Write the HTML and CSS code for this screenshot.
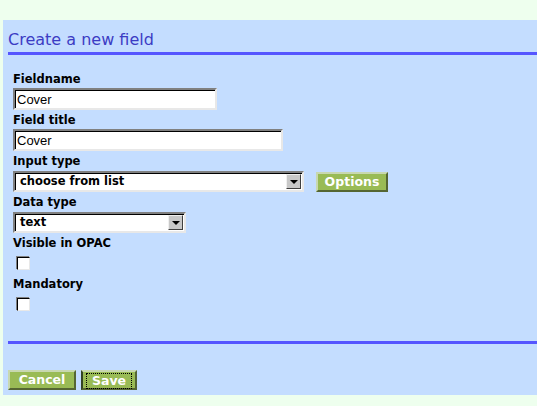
FILE: index.html
```html
<!DOCTYPE html>
<html>
<head>
<meta charset="utf-8">
<link rel="stylesheet" href="styles.css">
</head>
<body>
<div class="panel">
  <h1 class="title">Create a new field</h1>
  <form class="form">
    <div class="field">
      <label class="lbl">Fieldname</label>
      <input class="txt txt-short" type="text" value="Cover">
    </div>
    <div class="field">
      <label class="lbl">Field title</label>
      <input class="txt txt-long" type="text" value="Cover">
    </div>
    <div class="field">
      <label class="lbl">Input type</label>
      <div class="row">
        <div class="sel sel-wide"><span class="sel-text">choose from list</span><span class="sel-btn"><span class="tri"></span></span></div>
        <button type="button" class="btn btn-opt">Options</button>
      </div>
    </div>
    <div class="field">
      <label class="lbl">Data type</label>
      <div class="row">
        <div class="sel sel-narrow"><span class="sel-text">text</span><span class="sel-btn"><span class="tri"></span></span></div>
      </div>
    </div>
    <div class="field">
      <label class="lbl">Visible in OPAC</label>
      <span class="chk"></span>
    </div>
    <div class="field">
      <label class="lbl">Mandatory</label>
      <span class="chk"></span>
    </div>
  </form>
  <div class="rule"></div>
  <div class="actions">
    <button type="button" class="btn btn-cancel">Cancel</button>
    <button type="button" class="btn btn-save"><span class="focus">Save</span></button>
  </div>
</div>
</body>
</html>
```
FILE: styles.css
```css
html, body {
  margin: 0;
  padding: 0;
  background: #eeffee;
  font-family: "DejaVu Sans", Verdana, sans-serif;
}
.panel {
  margin: 20px 0 0 3px;
  padding: 0 0 0 5px;
  background: #c4ddff;
  height: 375px;
  box-sizing: border-box;
}
.title {
  margin: 0;
  padding: 10px 0 0 0;
  height: 22px;
  font-size: 16px;
  line-height: 19px;
  font-weight: normal;
  color: #3c3cc4;
  border-bottom: 3px solid #5555ff;
}
.form {
  margin: 0;
  padding: 14px 0 0 5px;
  height: 286px;
  box-sizing: border-box;
}
.field {
  display: flex;
  flex-direction: column;
  align-items: flex-start;
}
.lbl {
  display: block;
  height: 19px;
  box-sizing: border-box;
  padding-top: 2px;
  font-size: 11.5px;
  font-weight: bold;
  line-height: 17px;
  color: #000;
}
.txt {
  display: block;
  height: 22px;
  box-sizing: border-box;
  border: 2px solid;
  border-color: #808080 #e8e8e8 #e8e8e8 #808080;
  box-shadow: inset 1px 1px 0 #000;
  background: #fff;
  font-family: "Liberation Sans", Arial, sans-serif;
  font-size: 13px;
  padding: 1px 0 0 2px;
  margin: 0;
  outline: none;
}
.txt-short { width: 204px; }
.txt-long { width: 270px; }
.row {
  display: flex;
  align-items: center;
  gap: 12px;
  margin-top: 1px;
}
.sel {
  display: flex;
  align-items: center;
  height: 21px;
  box-sizing: border-box;
  border: 2px solid;
  border-color: #808080 #e8e8e8 #e8e8e8 #808080;
  box-shadow: inset 1px 1px 0 #000;
  background: #fff;
  padding: 0 1px 0 5px;
}
.sel-wide { width: 291px; }
.sel-narrow { width: 173px; }
.sel-text {
  flex: 1;
  font-size: 11.5px;
  font-weight: bold;
  line-height: 15px;
}
.sel-btn {
  width: 15px;
  height: 15px;
  box-sizing: border-box;
  background: #c8c8c8;
  border: 1px solid;
  border-color: #f0f0f0 #404040 #404040 #f0f0f0;
  display: flex;
  align-items: center;
  justify-content: center;
}
.tri {
  width: 0;
  height: 0;
  border-left: 4px solid transparent;
  border-right: 4px solid transparent;
  border-top: 4px solid #000;
}
.chk {
  display: block;
  width: 13px;
  height: 13px;
  box-sizing: border-box;
  margin: 5px 0 4px 4px;
  background: #fff;
  border: 1px solid;
  border-color: #000 #e8e8e8 #e8e8e8 #000;
  box-shadow: -1px -1px 0 #808080;
}
.rule {
  height: 3px;
  background: #5555ff;
}
.actions {
  display: flex;
  gap: 5px;
  padding-top: 26px;
}
.btn {
  margin: 0;
  height: 20px;
  box-sizing: border-box;
  background: #99bb55;
  border: 2px solid;
  border-color: #c8d8b0 #556633 #556633 #c8d8b0;
  color: #fff;
  font-family: "DejaVu Sans", Verdana, sans-serif;
  font-weight: bold;
  font-size: 12.5px;
  line-height: 14px;
  padding: 0 4px;
}
.btn-opt { width: 72px; }
.btn-cancel { width: 68px; }
.btn-save {
  width: 56px;
  border-left-color: #334422;
  padding: 1px 3px;
}
.focus {
  display: block;
  border: 1px dotted #000;
  line-height: 14px;
  padding: 0 3px;
}
```
